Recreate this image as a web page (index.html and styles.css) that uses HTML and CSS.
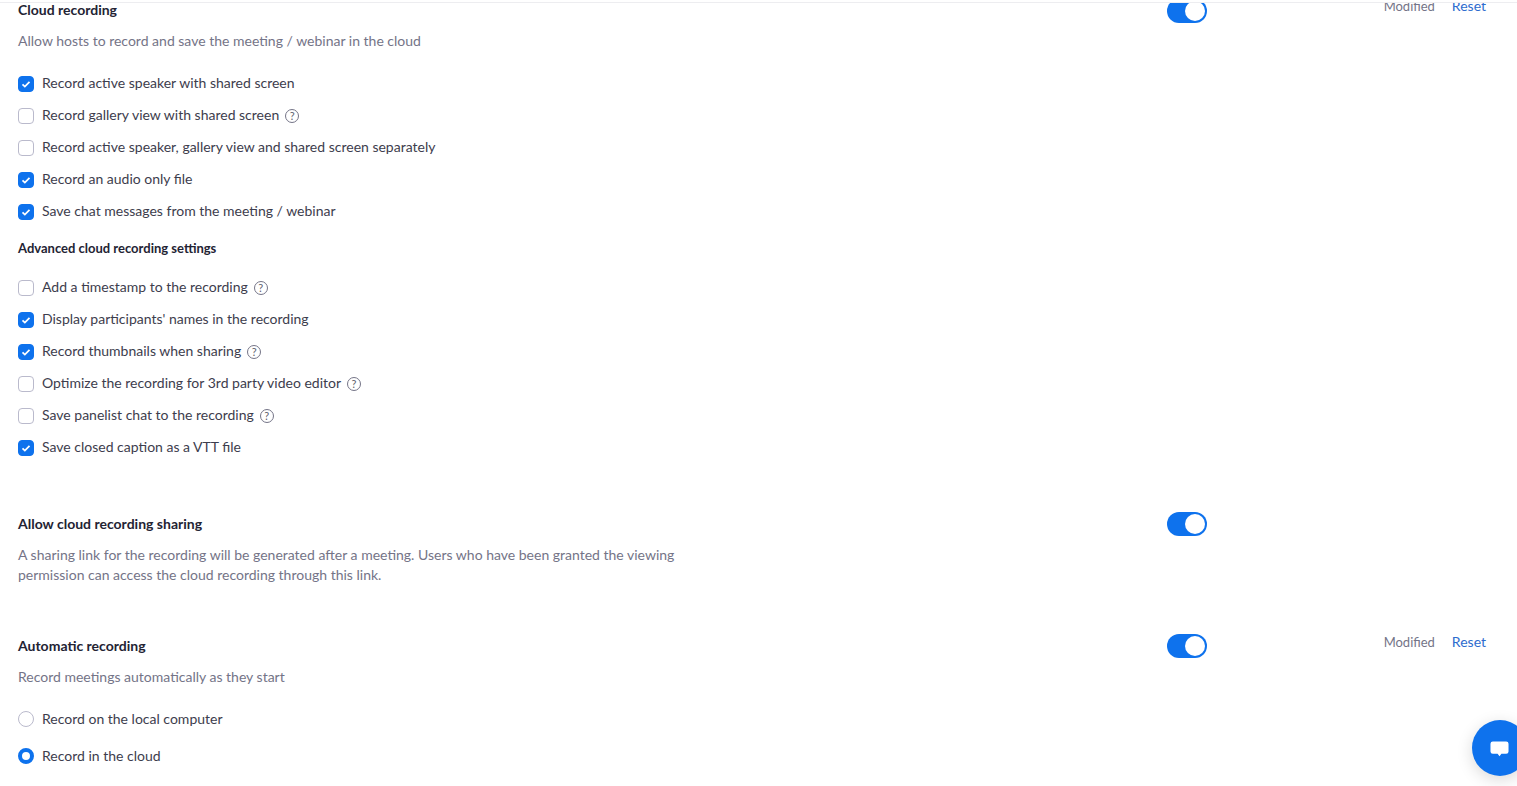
FILE: index.html
```html
<!DOCTYPE html>
<html lang="en">
<head>
    <meta charset="UTF-8">
    <title>Recording settings</title>
    <link rel="stylesheet" href="styles.css">
</head>
<body>
    <div class="topline"></div>
    <div class="content">
        <section class="setting first">
            <div class="setting-main">
                <h3>Cloud recording</h3>
                <p class="desc">Allow hosts to record and save the meeting / webinar in the cloud</p>
                <ul class="options">
                    <li><span class="check on"><svg viewBox="0 0 16 16"><path d="M4 8.3l2.7 2.6L12 5.6"/></svg></span>Record active speaker with shared screen</li>
                    <li><span class="check"></span>Record gallery view with shared screen<span class="help">?</span></li>
                    <li><span class="check"></span>Record active speaker, gallery view and shared screen separately</li>
                    <li><span class="check on"><svg viewBox="0 0 16 16"><path d="M4 8.3l2.7 2.6L12 5.6"/></svg></span>Record an audio only file</li>
                    <li><span class="check on"><svg viewBox="0 0 16 16"><path d="M4 8.3l2.7 2.6L12 5.6"/></svg></span>Save chat messages from the meeting / webinar</li>
                </ul>
                <h4>Advanced cloud recording settings</h4>
                <ul class="options">
                    <li><span class="check"></span>Add a timestamp to the recording<span class="help">?</span></li>
                    <li><span class="check on"><svg viewBox="0 0 16 16"><path d="M4 8.3l2.7 2.6L12 5.6"/></svg></span>Display participants' names in the recording</li>
                    <li><span class="check on"><svg viewBox="0 0 16 16"><path d="M4 8.3l2.7 2.6L12 5.6"/></svg></span>Record thumbnails when sharing<span class="help">?</span></li>
                    <li><span class="check"></span>Optimize the recording for 3rd party video editor<span class="help">?</span></li>
                    <li><span class="check"></span>Save panelist chat to the recording<span class="help">?</span></li>
                    <li><span class="check on"><svg viewBox="0 0 16 16"><path d="M4 8.3l2.7 2.6L12 5.6"/></svg></span>Save closed caption as a VTT file</li>
                </ul>
            </div>
            <span class="toggle"></span>
            <div class="status"><span class="modified">Modified</span><a href="#">Reset</a></div>
        </section>
        <section class="setting sharing">
            <div class="setting-main">
                <h3>Allow cloud recording sharing</h3>
                <p class="desc narrow">A sharing link for the recording will be generated after a meeting. Users who have been granted the viewing permission can access the cloud recording through this link.</p>
            </div>
            <span class="toggle"></span>
        </section>
        <section class="setting automatic">
            <div class="setting-main">
                <h3>Automatic recording</h3>
                <p class="desc">Record meetings automatically as they start</p>
                <ul class="radios">
                    <li><span class="radio"></span>Record on the local computer</li>
                    <li><span class="radio on"></span>Record in the cloud</li>
                </ul>
            </div>
            <span class="toggle"></span>
            <div class="status"><span class="modified">Modified</span><a href="#">Reset</a></div>
        </section>
    </div>
    <button class="chat-btn" aria-label="Chat">
        <svg viewBox="0 0 20 20"><path d="M3 1.5h14a2.5 2.5 0 0 1 2.500 2.500v8a2.500 2.500 0 0 1-2.500 2.500h-5l-2 2.500-2-2.500H3A2.500 2.500 0 0 1 .5 12V4A2.500 2.500 0 0 1 3 1.500z"/></svg>
    </button>
</body>
</html>
```

FILE: styles.css
```css
* {
    box-sizing: border-box;
    margin: 0;
    padding: 0;
}
html, body {
    height: 100%;
    overflow: hidden;
}
body {
    font-family: Lato, "Liberation Sans", sans-serif;
    font-size: 14px;
    line-height: 20px;
    color: #3d3d4d;
    background-color: #fff;
}
.topline {
    position: fixed;
    top: 0;
    left: 0;
    right: 0;
    height: 3px;
    background-color: #fff;
    border-bottom: 1px solid #ededf0;
    z-index: 2;
}
.setting {
    display: flex;
    align-items: flex-start;
    padding: 0 31px 0 18px;
}
.sharing {
    margin-top: 51px;
}
.automatic {
    margin-top: 51px;
}
.setting-main {
    width: 1149px;
    flex: none;
}
h3 {
    font-size: 14px;
    font-weight: 700;
    color: #232333;
}
h4 {
    font-size: 13px;
    font-weight: 700;
    color: #232333;
    margin-top: 11px;
}
.desc {
    color: #747487;
    margin-top: 11px;
}
.narrow {
    width: 670px;
}
.options {
    list-style: none;
    margin-top: 16px;
}
h4 + .options {
    margin-top: 13px;
}
.options li, .radios li {
    display: flex;
    align-items: center;
    height: 32px;
}
.radios {
    list-style: none;
    margin-top: 13px;
}
.radios li {
    height: 37px;
}
.check {
    width: 16px;
    height: 16px;
    border: 1px solid #babacc;
    border-radius: 4px;
    margin-right: 8px;
    flex: none;
    display: block;
    margin-top: 1px;
}
.check.on {
    background-color: #0e72ed;
    border-color: #0e72ed;
}
.check svg {
    display: block;
    width: 14px;
    height: 14px;
    fill: none;
    stroke: #fff;
    stroke-width: 2;
}
.help {
    width: 14px;
    height: 14px;
    border: 1px solid #747487;
    border-radius: 50%;
    margin-left: 6px;
    margin-top: 2px;
    font-size: 11px;
    line-height: 12px;
    text-align: center;
    color: #5f5f6e;
    flex: none;
}
.radio {
    width: 16px;
    height: 16px;
    border: 1px solid #babacc;
    border-radius: 50%;
    margin-right: 8px;
    flex: none;
}
.radio.on {
    border: 4px solid #0e72ed;
}
.toggle {
    position: relative;
    display: block;
    width: 40px;
    height: 24px;
    margin-top: -2px;
    border-radius: 12px;
    background-color: #0e72ed;
    flex: none;
}
.first .toggle {
    margin-top: -1px;
}
.toggle::after {
    content: "";
    position: absolute;
    top: 2px;
    right: 2px;
    width: 20px;
    height: 20px;
    border-radius: 50%;
    background-color: #fff;
}
.status {
    margin-left: auto;
    margin-top: -4px;
    display: flex;
    align-items: baseline;
    gap: 17px;
    font-size: 13px;
}
.modified {
    color: #747487;
}
.status a {
    font-size: 14px;
    color: #2d6cce;
    text-decoration: none;
}
.chat-btn {
    position: fixed;
    left: 1472px;
    top: 720px;
    width: 56px;
    height: 56px;
    border: none;
    border-radius: 50%;
    background-color: #0e72ed;
    box-shadow: 0 4px 16px rgba(0,0,0,0.15);
    cursor: pointer;
}
.chat-btn svg {
    position: absolute;
    left: 18px;
    top: 20px;
    width: 19px;
    height: 19px;
    fill: #fff;
}
```
